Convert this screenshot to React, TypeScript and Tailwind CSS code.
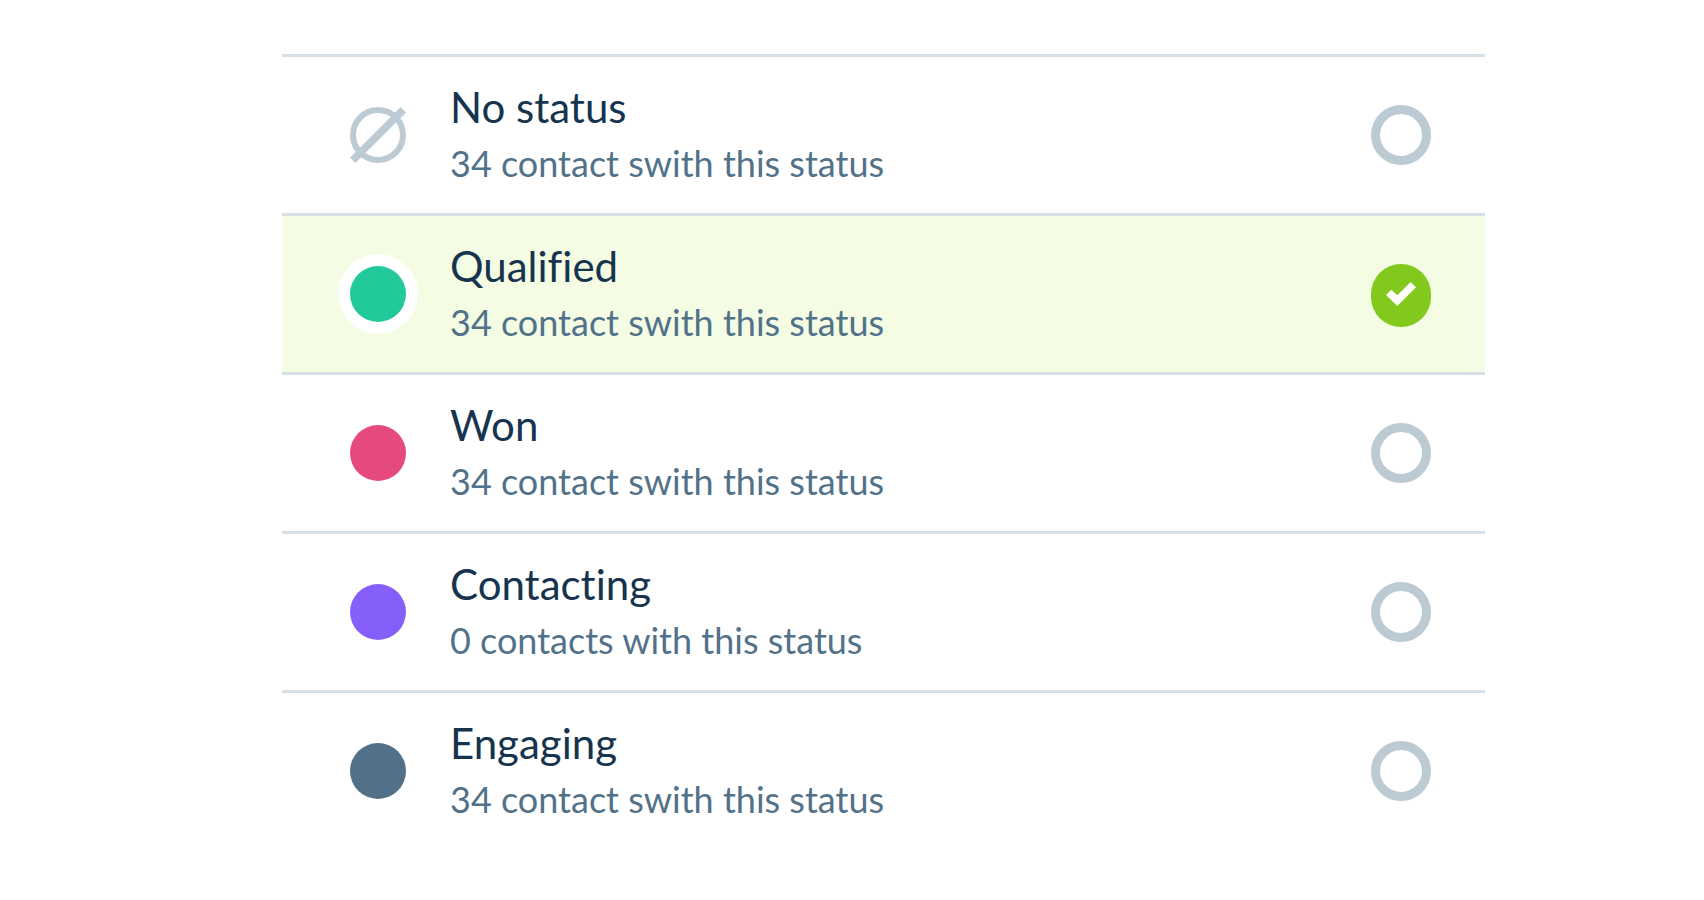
import { useState } from "react";

type Status = { id: string; name: string; detail: string; dot: string | null };

const statuses: Status[] = [
  { id: "none", name: "No status", detail: "34 contact swith this status", dot: null },
  { id: "qualified", name: "Qualified", detail: "34 contact swith this status", dot: "bg-[#22c99a]" },
  { id: "won", name: "Won", detail: "34 contact swith this status", dot: "bg-[#e6497e]" },
  { id: "contacting", name: "Contacting", detail: "0 contacts with this status", dot: "bg-[#865ffa]" },
  { id: "engaging", name: "Engaging", detail: "34 contact swith this status", dot: "bg-[#527087]" },
];

function EmptyIcon() {
  return (
    <svg viewBox="0 0 56 56" className="size-14" fill="none" stroke="#bccad3" aria-hidden="true">
      <circle cx="28" cy="28" r="25" strokeWidth="6" />
      <path d="M2.700 53.300 53.300 2.700" strokeWidth="7.600" />
    </svg>
  );
}

function RadioMark({ checked }: { checked: boolean }) {
  if (!checked) return <span className="size-15 rounded-full border-9 border-[#bccad3]" />;
  return (
    <span className="flex size-15 items-start">
      <svg viewBox="0 0 60 63" className="h-[63px] w-15 shrink-0" aria-hidden="true">
        <rect width="60" height="63" rx="30" fill="#82c91e" />
        <path d="M15 31l5.300-5.300 6 5.600L39.700 18l5.300 5.300L26.300 42z" fill="#fff" />
      </svg>
    </span>
  );
}

export default function App() {
  const [selected, setSelected] = useState("qualified");
  return (
    <main className="min-h-screen bg-white pt-[54px] pr-[219px] pl-[282px] font-['Lato',sans-serif] [font-variant-ligatures:none]">
      <fieldset>
        {statuses.map((s) => {
          const checked = s.id === selected;
          return (
            <label
              key={s.id}
              className={`flex min-h-[159px] cursor-pointer items-center border-t-3 border-[#d5e0e7] pr-[54px] pl-14 ${checked ? "bg-[#f4fce3]" : "bg-white"}`}
            >
              <input
                type="radio"
                name="status"
                className="sr-only"
                checked={checked}
                onChange={() => setSelected(s.id)}
              />
              <span className="flex size-20 items-center justify-center rounded-full bg-white">
                {s.dot ? <span className={`size-14 rounded-full ${s.dot}`} /> : <EmptyIcon />}
              </span>
              <span className="ml-8 flex flex-1 flex-col">
                <span className="text-[42px] leading-14 text-[#16344d]">{s.name}</span>
                <span className="text-[36px] leading-14 text-[#527289]">{s.detail}</span>
              </span>
              <RadioMark checked={checked} />
            </label>
          );
        })}
      </fieldset>
    </main>
  );
}
